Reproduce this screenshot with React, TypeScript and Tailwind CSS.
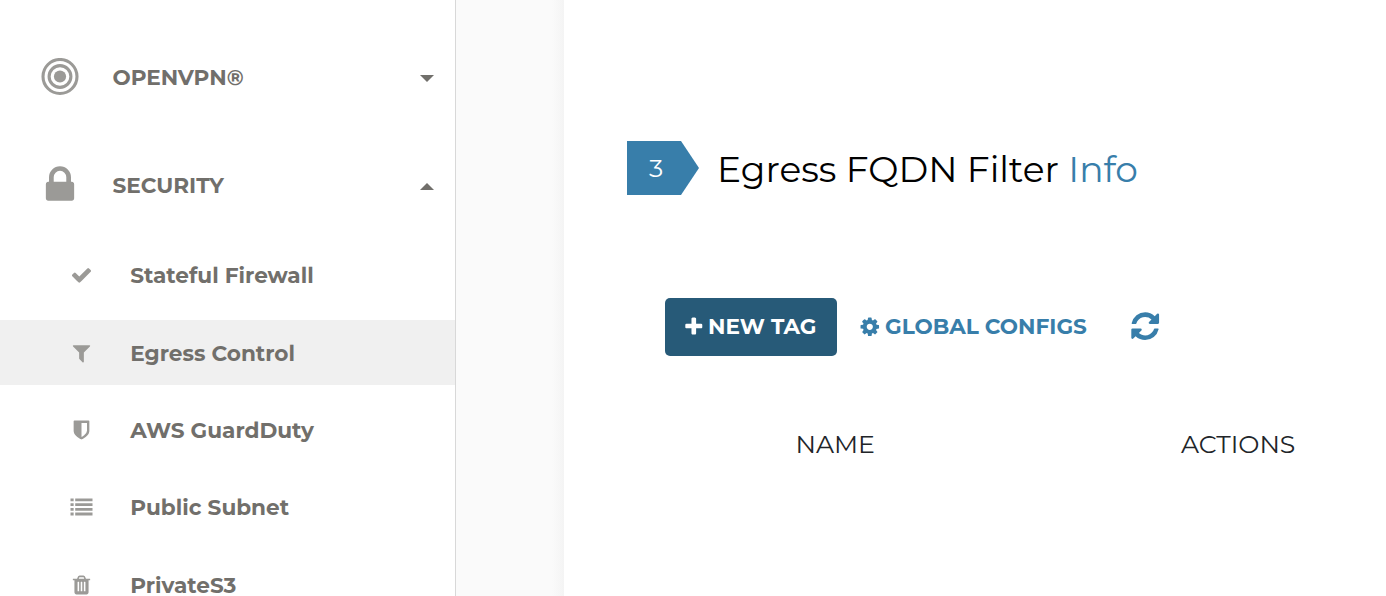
import type { ReactNode } from "react";

const CHECK =
  "M1671 566q0 40-28 68l-724 724-136 136q-28 28-68 28t-68-28l-136-136-362-362q-28-28-28-68t28-68l136-136q28-28 68-28t68 28l294 295 656-657q28-28 68-28t68 28l136 136q28 28 28 68z";
const FILTER =
  "M1595 295q17 41-14 70l-493 493v742q0 42-39 59-13 5-25 5-27 0-45-19l-256-256q-19-19-19-45v-486l-493-493q-31-29-14-70 17-39 59-39h1280q42 0 59 39z";
const SHIELD =
  "M1344 960v-640h-448v1137q119-63 213-137 235-184 235-360zm192-768v768q0 86-33.5 170.5t-83 150-118 127.5-126.5 103-121 77.5-89.5 49.5-42.5 20q-12 6-26 6t-26-6q-16-7-42.5-20t-89.5-49.5-121-77.5-126.5-103-118-127.5-83-150-33.5-170.5v-768q0-26 19-45t45-19h1152q26 0 45 19t19 45z";
const LIST =
  "M0 200h256v236h-256zM384 200h1408v236h-1408zM0 584h256v236h-256zM384 584h1408v236h-1408zM0 968h256v236h-256zM384 968h1408v236h-1408zM0 1352h256v236h-256zM384 1352h1408v236h-1408z";
const TRASH =
  "M704 1376v-704q0-14-9-23t-23-9h-64q-14 0-23 9t-9 23v704q0 14 9 23t23 9h64q14 0 23-9t9-23zm256 0v-704q0-14-9-23t-23-9h-64q-14 0-23 9t-9 23v704q0 14 9 23t23 9h64q14 0 23-9t9-23zm256 0v-704q0-14-9-23t-23-9h-64q-14 0-23 9t-9 23v704q0 14 9 23t23 9h64q14 0 23-9t9-23zm-544-992h448l-48-117q-7-9-17-11h-317q-10 2-17 11zm928 32v64q0 14-9 23t-23 9h-96v948q0 83-47 143.500t-113 60.500h-832q-66 0-113-58.500t-47-141.500v-952h-96q-14 0-23-9t-9-23v-64q0-14 9-23t23-9h309l70-167q15-37 54-63t79-26h320q40 0 79 26t54 63l70 167h309q14 0 23 9t9 23z";
const LOCK =
  "M640 768h512v-192q0-106-75-181t-181-75-181 75-75 181v192zm832 96v576q0 40-28 68t-68 28h-960q-40 0-68-28t-28-68v-576q0-40 28-68t68-28h32v-192q0-184 132-316t316-132 316 132 132 316v192h32q40 0 68 28t28 68z";
const PLUS =
  "M1600 736v192q0 40-28 68t-68 28h-416v416q0 40-28 68t-68 28h-192q-40 0-68-28t-28-68v-416h-416q-40 0-68-28t-28-68v-192q0-40 28-68t68-28h416v-416q0-40 28-68t68-28h192q40 0 68 28t28 68v416h416q40 0 68 28t28 68z";
const COG =
  "M1152 896q0-106-75-181t-181-75-181 75-75 181 75 181 181 75 181-75 75-181zm512-109v222q0 12-8 23t-20 13l-185 28q-19 54-39 91 35 50 107 138 10 12 10 25t-9 23q-27 37-99 108t-94 71q-12 0-26-9l-138-108q-44 23-91 38-16 136-29 186-7 28-36 28h-222q-14 0-24.5-8.5t-11.5-21.5l-28-184q-49-16-90-37l-141 107q-10 9-25 9-14 0-25-11-126-114-165-168-7-10-7-23 0-12 8-23 15-21 51-66.5t54-70.5q-27-50-41-99l-183-27q-13-2-21-12.5t-8-23.5v-222q0-12 8-23t19-13l186-28q14-46 39-92-40-57-107-138-10-12-10-24 0-10 9-23 26-36 98.5-107.5t94.5-71.5q13 0 26 10l138 107q44-23 91-38 16-136 29-186 7-28 36-28h222q14 0 24.5 8.5t11.5 21.5l28 184q49 16 90 37l142-107q9-9 24-9 13 0 25 10 129 119 165 170 7 8 7 22 0 12-8 23-15 21-51 66.5t-54 70.5q26 50 41 98l183 28q13 2 21 12.5t8 23.5z";
const REFRESH =
  "M1639 1056q0 5-1 7-64 268-268 434.5t-478 166.5q-146 0-282.5-55t-243.5-157l-129 129q-19 19-45 19t-45-19-19-45v-448q0-26 19-45t45-19h448q26 0 45 19t19 45-19 45l-137 137q71 66 161 102t187 36q134 0 250-65t186-179q11-17 53-117 8-23 30-23h192q13 0 22.5 9.5t9.5 22.5zm25-800v448q0 26-19 45t-45 19h-448q-26 0-45-19t-19-45 19-45l138-138q-148-137-349-137-134 0-250 65t-186 179q-11 17-53 117-8 23-30 23h-199q-13 0-22.5-9.5t-9.5-22.5v-7q65-268 270-434.5t480-166.5q146 0 284 55.5t245 156.5l130-129q19-19 45-19t45 19 19 45z";

function Icon({ d, className }: { d: string; className: string }) {
  return (
    <svg viewBox="0 0 1792 1792" fill="currentColor" aria-hidden="true" className={`shrink-0 ${className}`}>
      <path d={d} />
    </svg>
  );
}

function Target() {
  return (
    <svg viewBox="0 0 38 38" aria-hidden="true" className="h-[38px] w-[38px]" fill="none" stroke="currentColor" strokeWidth="3.1">
      <circle cx="19" cy="18.5" r="17" />
      <circle cx="19" cy="18.5" r="10.9" />
      <circle cx="19" cy="18.5" r="6.1" fill="currentColor" stroke="none" />
    </svg>
  );
}

function Section({ icon, label, caret }: { icon: ReactNode; label: string; caret: string }) {
  return (
    <div className="flex h-[108px] items-center">
      <div className="flex w-[120px] shrink-0 justify-center text-[#9b9a97]">{icon}</div>
      <span className="mt-px -ml-[7.6px] flex-1 whitespace-nowrap text-[21.6px] font-bold">{label}</span>
      <svg viewBox="0 0 14 7" aria-hidden="true" className="mt-[3px] mr-[21px] h-[7px] w-[14px]" fill="currentColor">
        <path d={caret} />
      </svg>
    </div>
  );
}

const items = [
  { d: CHECK, label: "Stateful Firewall", icon: "mt-0", text: "mt-px" },
  { d: FILTER, label: "Egress Control", icon: "mt-0", text: "mt-px", active: true },
  { d: SHIELD, label: "AWS GuardDuty", icon: "mt-0", text: "mt-px" },
  { d: LIST, label: "Public Subnet", icon: "-mt-px", text: "-mt-px" },
  { d: TRASH, label: "PrivateS3", icon: "mt-0", text: "mt-px" },
];

export default function App() {
  return (
    <div className="flex h-[596px] w-[1386px] overflow-hidden bg-[#fafafa] font-['Montserrat','Inter',sans-serif]">
      <nav className="w-[456px] shrink-0 border-r border-[#d8d8d8] bg-white pt-[23px] text-[#716f6b]">
        <Section icon={<Target />} label="OPENVPN®" caret="M0 0h14l-7 7z" />
        <Section icon={<Icon d={LOCK} className="h-[44px] w-[44px]" />} label="SECURITY" caret="M0 7h14l-7-7z" />
        <ul className="mt-[3.5px] flex flex-col gap-[12.5px]">
          {items.map((item) => (
            <li key={item.label} className={`flex h-[65px] shrink-0 items-center pl-[70px] ${item.active ? "bg-[#f0f0f0]" : ""}`}>
              <Icon d={item.d} className={`h-[22px] w-[23px] text-[#9b9a97] ${item.icon}`} />
              <span className={`ml-[37.2px] whitespace-nowrap text-[21.6px] font-bold ${item.text}`}>{item.label}</span>
            </li>
          ))}
        </ul>
      </nav>
      <div className="ml-auto w-3 shrink-0 bg-linear-to-r from-[#fafafa] to-[#f4f4f4]" />
      <main className="w-[822px] shrink-0 bg-white pt-[141px] pl-[63px]">
        <header className="flex h-[54px] items-center">
          <div className="flex h-[54px] w-[72px] items-center bg-[#387eaa] pt-0.5 pl-[22px] text-[25.2px] text-white [clip-path:polygon(0_0,75%_0,100%_50%,75%_100%,0_100%)]">
            3
          </div>
          <h1 className="mt-0.5 ml-[18px] whitespace-nowrap text-[36px] text-black">
            Egress FQDN Filter <a className="text-[#387eaa]">Info</a>
          </h1>
        </header>
        <div className="mt-[103px] ml-[38px] flex h-[58px] items-center text-[21.6px] font-bold text-[#387eaa]">
          <button className="flex h-[58px] w-[172px] items-center rounded-[5px] bg-[#275a78] pl-[18px] text-white">
            <Icon d={PLUS} className="-mt-px h-[21.6px] w-[21.6px]" />
            <span className="-mt-px ml-[3.4px] whitespace-nowrap">NEW TAG</span>
          </button>
          <button className="ml-[22px] flex w-[230px] items-center">
            <Icon d={COG} className="-mt-px h-[21.6px] w-[21.6px]" />
            <span className="-mt-0.5 ml-[4.4px] whitespace-nowrap">GLOBAL CONFIGS</span>
          </button>
          <Icon d={REFRESH} className="ml-[39.5px] -mt-px h-[32.4px] w-[32.4px]" />
        </div>
        <div className="mt-[70px] flex text-[25.2px] leading-9 text-[#212529]">
          <span className="ml-[168.5px] w-[385.4px]">NAME</span>
          <span>ACTIONS</span>
        </div>
      </main>
    </div>
  );
}
